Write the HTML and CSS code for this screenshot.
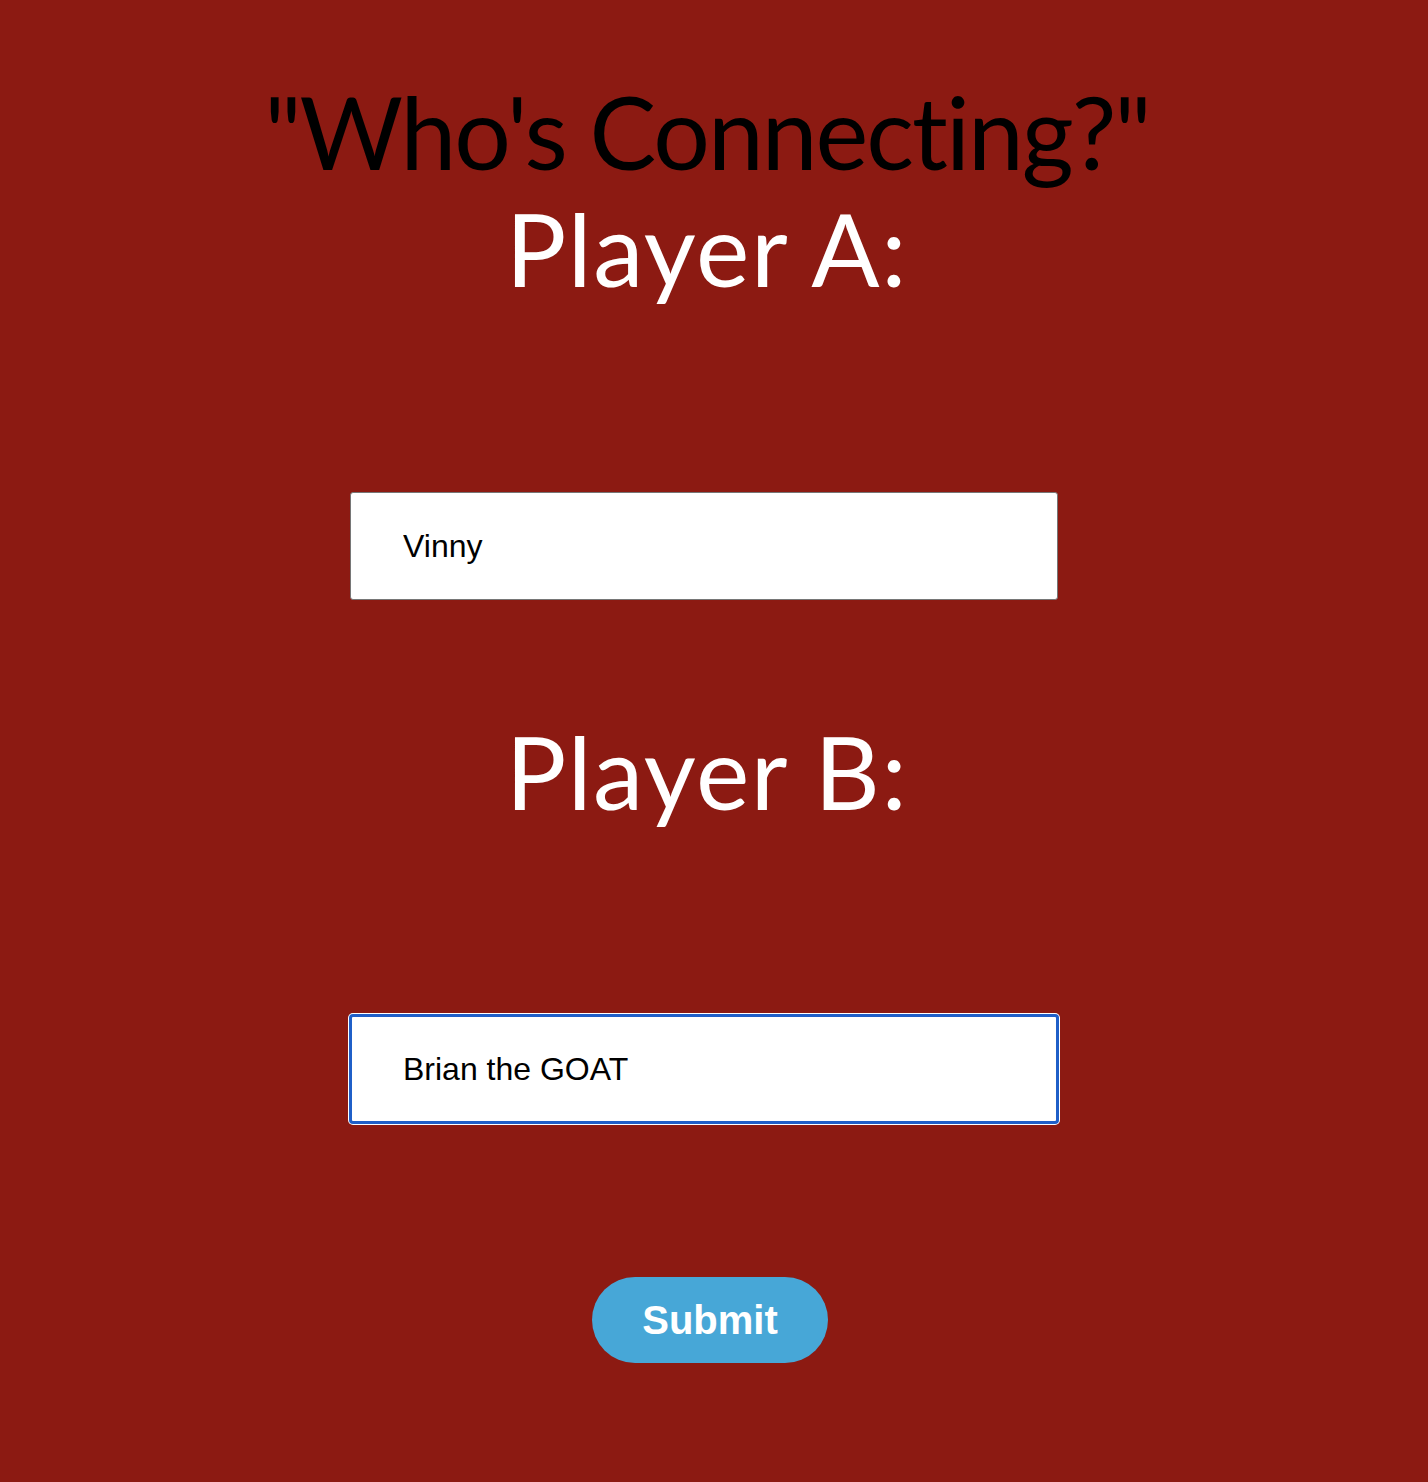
FILE: index.html
```html
<!DOCTYPE html>
<html lang="en">
<head>
<meta charset="utf-8">
<title>Who's Connecting?</title>
<link rel="stylesheet" href="styles.css">
</head>
<body>
<main class="page">
  <h1 class="title">"Who's Connecting?"</h1>
  <form class="form">
    <label class="player-label" for="player-a">Player A:</label>
    <input class="name-input" id="player-a" type="text" value="Vinny">
    <label class="player-label" for="player-b">Player B:</label>
    <input class="name-input is-focused" id="player-b" type="text" value="Brian the GOAT">
    <button class="submit" type="button">Submit</button>
  </form>
</main>
</body>
</html>
```

FILE: styles.css
```css
html, body {
  margin: 0;
  padding: 0;
  background: #8c1a12;
}

body {
  min-height: 1482px;
}

.page {
  display: flex;
  flex-direction: column;
  align-items: center;
  padding: 73px 14px 0 0;
  font-family: "Lato", "Open Sans", sans-serif;
  font-variant-ligatures: none;
}

.title {
  margin: 0;
  font-size: 100px;
  line-height: 117px;
  font-weight: 400;
  letter-spacing: -2px;
  color: #000;
  text-align: center;
}

.form {
  display: flex;
  flex-direction: column;
  align-items: center;
}

.player-label {
  display: block;
  font-size: 101px;
  line-height: 117px;
  letter-spacing: 1.6px;
  color: #fff;
  margin-bottom: 185px;
}

.name-input {
  box-sizing: border-box;
  width: 708px;
  height: 108px;
  margin: 0 6px 113px 0;
  padding: 0 0 0 52px;
  border: 1px solid #767676;
  border-radius: 3px;
  background: #fff;
  font-family: "Liberation Sans", Arial, sans-serif;
  font-size: 32px;
  color: #000;
  outline: none;
}

.name-input.is-focused {
  border: 2px solid #1f5fc8;
  padding-left: 51px;
  box-shadow: 0 0 0 1px #1f5fc8, 0 0 0 2px #fff;
  margin-bottom: 154px;
}

.submit {
  width: 236px;
  height: 86px;
  margin-left: 6px;
  border: none;
  border-radius: 43px;
  background: #47a7d7;
  color: #fff;
  font-family: "Liberation Sans", Arial, sans-serif;
  font-weight: 700;
  font-size: 40px;
  cursor: pointer;
}
```
